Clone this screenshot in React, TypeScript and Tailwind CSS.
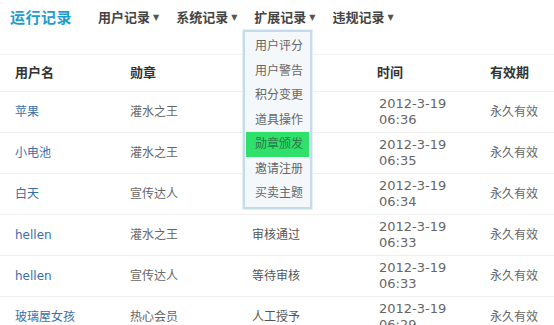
import React from 'react';

const rows = [
  { name: '苹果', medal: '灌水之王', status: '', time: '06:36' },
  { name: '小电池', medal: '灌水之王', status: '', time: '06:35' },
  { name: '白天', medal: '宣传达人', status: '', time: '06:34' },
  { name: 'hellen', medal: '灌水之王', status: '审核通过', time: '06:33' },
  { name: 'hellen', medal: '宣传达人', status: '等待审核', time: '06:33' },
  { name: '玻璃屋女孩', medal: '热心会员', status: '人工授予', time: '06:29' },
];

const menu = ['用户评分', '用户警告', '积分变更', '道具操作', '勋章颁发', '邀请注册', '买卖主题'];

const navs = ['用户记录', '系统记录', '扩展记录', '违规记录'];

export default function App() {
  return (
    <div className="relative w-[554px] h-[325px] overflow-hidden bg-white font-['DejaVu_Sans','Noto_Sans_CJK_SC',sans-serif]">
      {/* Top bar */}
      <div className="flex items-center h-[36px] pl-[10px]">
        <h1 className="text-[15px] font-bold text-[#1f9ccf] tracking-[0.5px] w-[88px]">运行记录</h1>
        <nav className="flex gap-[17px] text-[13px] font-bold text-[#444]">
          {navs.map((n) => (
            <span key={n} className="flex items-center gap-[3px]">
              {n}
              <span className="text-[8px] text-[#555]">▼</span>
            </span>
          ))}
        </nav>
      </div>

      {/* Table */}
      <div className="mt-[18px] border-t border-[#f2f2f2]">
        <div className="grid grid-cols-[115px_122px_125px_113px_1fr] items-center h-[37px] pl-[15px] text-[13px] font-bold text-[#333] border-b border-[#eee]">
          <span>用户名</span>
          <span>勋章</span>
          <span></span>
          <span>时间</span>
          <span>有效期</span>
        </div>
        {rows.map((r, i) => (
          <div
            key={i}
            className="grid grid-cols-[115px_122px_127px_111px_1fr] items-center h-[41px] pl-[15px] border-b border-[#f0f0f0]"
          >
            <span className="text-[12px] text-[#3b6fa8]">{r.name}</span>
            <span className="text-[12px] text-[#666]">{r.medal}</span>
            <span className="text-[12px] text-[#555]">{r.status}</span>
            <span className="text-[13px] leading-[16px] text-[#666]">
              2012-3-19
              <br />
              {r.time}
            </span>
            <span className="text-[12px] text-[#666]">永久有效</span>
          </div>
        ))}
      </div>

      {/* Dropdown menu */}
      <div className="absolute left-[243px] top-[30px] w-[69px] border-2 border-[#c4dbea] bg-[#f5f8fb] pt-[2px] pb-[1px] shadow-[0_0_0_1px_#e6f0f7]">
        {menu.map((m) => (
          <div
            key={m}
            className={`h-[24.5px] flex items-center pl-[9px] mx-[1px] text-[12px] ${
              m === '勋章颁发' ? 'bg-[#2fe06a] text-[#2a7a45]' : 'text-[#666]'
            }`}
          >
            {m}
          </div>
        ))}
      </div>
    </div>
  );
}
